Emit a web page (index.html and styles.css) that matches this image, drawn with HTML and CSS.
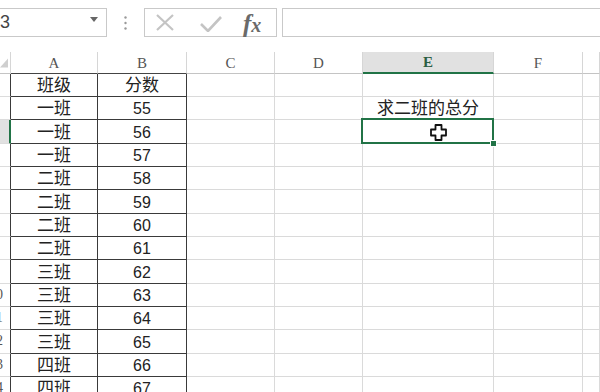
FILE: index.html
```html
<!DOCTYPE html>
<html lang="zh-CN">
<head>
    <meta charset="UTF-8">
    <meta name="viewport" content="width=device-width, initial-scale=1.0">
    <link rel="stylesheet" href="styles.css">
</head>
<body>
    <div class="toolbar">
        <div class="namebox">
            <span>E3</span>
            <svg class="caret" width="8" height="5" viewBox="0 0 8 5"><path d="M0 0 H8 L4 5 Z" fill="#666"/></svg>
        </div>
        <div class="dots">
            <svg width="3" height="14" viewBox="0 0 3 14"><circle cx="1.5" cy="1.5" r="1.2" fill="#9a9a9a"/><circle cx="1.5" cy="7" r="1.2" fill="#9a9a9a"/><circle cx="1.5" cy="12.5" r="1.2" fill="#9a9a9a"/></svg>
        </div>
        <div class="fxbox">
            <svg class="icon-x" width="20" height="17" viewBox="0 0 20 17"><path d="M2 1 L18 16 M18 1 L2 16" stroke="#c4c4c4" stroke-width="2.2" fill="none"/></svg>
            <svg class="icon-ok" width="22" height="17" viewBox="0 0 22 17"><path d="M1 9 L8 16 L21 2" stroke="#c4c4c4" stroke-width="2.6" fill="none"/></svg>
            <span class="fx">f<span class="fx-x">x</span></span>
        </div>
        <div class="formula"></div>
    </div>

    <div class="sheet">
        <div class="row hdr">
            <div class="corner"><svg width="9" height="10" viewBox="0 0 9 10"><path d="M9 0 V10 H0 Z" fill="#cfcfcf"/></svg></div>
            <div class="ch dark">A</div>
            <div class="ch dark">B</div>
            <div class="ch">C</div>
            <div class="ch">D</div>
            <div class="ch sel">E</div>
            <div class="ch">F</div>
            <div class="ch"></div>
        </div>
        <div class="row">
            <div class="rh"><span>1</span></div>
            <div class="c t cn">班级</div>
            <div class="c t cn">分数</div>
            <div class="c"></div><div class="c"></div><div class="c"></div><div class="c"></div><div class="c"></div>
        </div>
        <div class="row">
            <div class="rh"><span>2</span></div>
            <div class="c t cn">一班</div>
            <div class="c t">55</div>
            <div class="c"></div><div class="c"></div>
            <div class="c cn">求二班的总分</div>
            <div class="c"></div><div class="c"></div>
        </div>
        <div class="row">
            <div class="rh on"><span>3</span></div>
            <div class="c t cn">一班</div>
            <div class="c t">56</div>
            <div class="c"></div><div class="c"></div>
            <div class="c active">
                <svg class="cursor" width="17" height="17" viewBox="0 0 17 17"><path d="M5.5 1 H11.5 V5.5 H16 V11.5 H11.5 V16 H5.5 V11.5 H1 V5.5 H5.5 Z" fill="#fff" stroke="#111" stroke-width="1.8" stroke-linejoin="round"/></svg>
            </div>
            <div class="c"></div><div class="c"></div>
        </div>
        <div class="row">
            <div class="rh"><span>4</span></div>
            <div class="c t cn">一班</div>
            <div class="c t">57</div>
            <div class="c"></div><div class="c"></div><div class="c"></div><div class="c"></div><div class="c"></div>
        </div>
        <div class="row">
            <div class="rh"><span>5</span></div>
            <div class="c t cn">二班</div>
            <div class="c t">58</div>
            <div class="c"></div><div class="c"></div><div class="c"></div><div class="c"></div><div class="c"></div>
        </div>
        <div class="row">
            <div class="rh"><span>6</span></div>
            <div class="c t cn">二班</div>
            <div class="c t">59</div>
            <div class="c"></div><div class="c"></div><div class="c"></div><div class="c"></div><div class="c"></div>
        </div>
        <div class="row">
            <div class="rh"><span>7</span></div>
            <div class="c t cn">二班</div>
            <div class="c t">60</div>
            <div class="c"></div><div class="c"></div><div class="c"></div><div class="c"></div><div class="c"></div>
        </div>
        <div class="row">
            <div class="rh"><span>8</span></div>
            <div class="c t cn">二班</div>
            <div class="c t">61</div>
            <div class="c"></div><div class="c"></div><div class="c"></div><div class="c"></div><div class="c"></div>
        </div>
        <div class="row">
            <div class="rh"><span>9</span></div>
            <div class="c t cn">三班</div>
            <div class="c t">62</div>
            <div class="c"></div><div class="c"></div><div class="c"></div><div class="c"></div><div class="c"></div>
        </div>
        <div class="row">
            <div class="rh"><span>10</span></div>
            <div class="c t cn">三班</div>
            <div class="c t">63</div>
            <div class="c"></div><div class="c"></div><div class="c"></div><div class="c"></div><div class="c"></div>
        </div>
        <div class="row">
            <div class="rh"><span>11</span></div>
            <div class="c t cn">三班</div>
            <div class="c t">64</div>
            <div class="c"></div><div class="c"></div><div class="c"></div><div class="c"></div><div class="c"></div>
        </div>
        <div class="row">
            <div class="rh"><span>12</span></div>
            <div class="c t cn">三班</div>
            <div class="c t">65</div>
            <div class="c"></div><div class="c"></div><div class="c"></div><div class="c"></div><div class="c"></div>
        </div>
        <div class="row">
            <div class="rh"><span>13</span></div>
            <div class="c t cn">四班</div>
            <div class="c t">66</div>
            <div class="c"></div><div class="c"></div><div class="c"></div><div class="c"></div><div class="c"></div>
        </div>
        <div class="row">
            <div class="rh"><span>14</span></div>
            <div class="c t cn">四班</div>
            <div class="c t">67</div>
            <div class="c"></div><div class="c"></div><div class="c"></div><div class="c"></div><div class="c"></div>
        </div>
    </div>
</body>
</html>
```

FILE: styles.css
```css
body {
    margin: 0;
    width: 600px;
    height: 392px;
    overflow: hidden;
    background: #fff;
    font-family: 'Liberation Sans', 'Noto Sans CJK SC', sans-serif;
    color: #222;
}

/* formula bar */
.toolbar {
    height: 52px;
    box-sizing: border-box;
    padding-top: 8px;
    display: flex;
    align-items: flex-start;
}

.namebox {
    margin-left: -18px;
    width: 125px;
    height: 29px;
    box-sizing: border-box;
    border: 1px solid #c9c9c9;
    display: flex;
    align-items: center;
    justify-content: space-between;
    padding: 0 8px 0 5px;
    font-size: 18px;
    color: #444;
}

.caret {
    margin-bottom: 6px;
}

.dots {
    width: 37px;
    height: 29px;
    display: flex;
    align-items: center;
    justify-content: center;
}

.fxbox {
    width: 133px;
    height: 29px;
    box-sizing: border-box;
    border: 1px solid #c9c9c9;
    display: flex;
    align-items: center;
    padding-left: 10px;
}

.icon-x {
    margin-right: 25px;
}

.icon-ok {
    margin-right: 21px;
    margin-top: 1px;
}

.fx {
    font-family: 'Liberation Serif', serif;
    font-style: italic;
    font-weight: bold;
    font-size: 25px;
    color: #6a6a6a;
    line-height: 1;
    margin-top: 2px;
}

.fx-x {
    font-size: 20px;
}

.formula {
    flex: 1;
    margin-left: 5px;
    height: 29px;
    box-sizing: border-box;
    border: 1px solid #c9c9c9;
    border-right: none;
}

/* grid */
.row {
    display: grid;
    grid-template-columns: 11px 87px 89px 88px 88px 131px 89px 1fr;
    height: 23.33px;
}

.row.hdr {
    height: 21.67px;
}

.corner {
    border-bottom: 1px solid #c4c4c4;
    border-right: 1px solid #d6d6d6;
    display: flex;
    align-items: flex-end;
    justify-content: flex-end;
    padding: 0 2px 5px 0;
    box-sizing: border-box;
}

.ch {
    box-sizing: border-box;
    border-right: 1px solid #d6d6d6;
    border-bottom: 1px solid #c4c4c4;
    display: flex;
    align-items: center;
    justify-content: center;
    font-family: 'Liberation Serif', serif;
    font-size: 15px;
    color: #555;
    padding-top: 2px;
}

.ch.dark {
    border-bottom-color: #444;
}

.ch.sel {
    background: #e1e1e1;
    border-bottom: 2px solid #217346;
    color: #2b5e43;
    font-weight: bold;
}

.rh {
    box-sizing: border-box;
    border-right: 1px solid #3a3a3a;
    border-bottom: 1px solid #dcdcdc;
    display: flex;
    align-items: center;
    overflow: hidden;
    font-family: 'Liberation Serif', serif;
    font-size: 14px;
    color: #555;
}

.rh span {
    flex-shrink: 0;
    width: 30px;
    margin-left: -19px;
    text-align: center;
}

.rh.on {
    background: #e1e1e1;
    border-right: 2px solid #217346;
}

.c {
    box-sizing: border-box;
    border-right: 1px solid #dadada;
    border-bottom: 1px solid #dadada;
    display: flex;
    align-items: flex-end;
    justify-content: center;
    white-space: nowrap;
    font-size: 16px;
    line-height: 20px;
}

.c.t {
    border-color: #3a3a3a;
}

.c.cn {
    font-size: 17px;
    line-height: 21px;
}

.c.active {
    position: relative;
    align-items: center;
}

.c.active::before {
    content: '';
    position: absolute;
    left: -2px;
    top: -2px;
    right: -1px;
    bottom: -1px;
    border: 2px solid #217346;
}

.c.active::after {
    content: '';
    position: absolute;
    right: -4px;
    bottom: -4px;
    width: 5px;
    height: 5px;
    background: #217346;
    border: 1px solid #fff;
}

.cursor {
    margin-left: 20px;
    margin-top: 2px;
}
```
